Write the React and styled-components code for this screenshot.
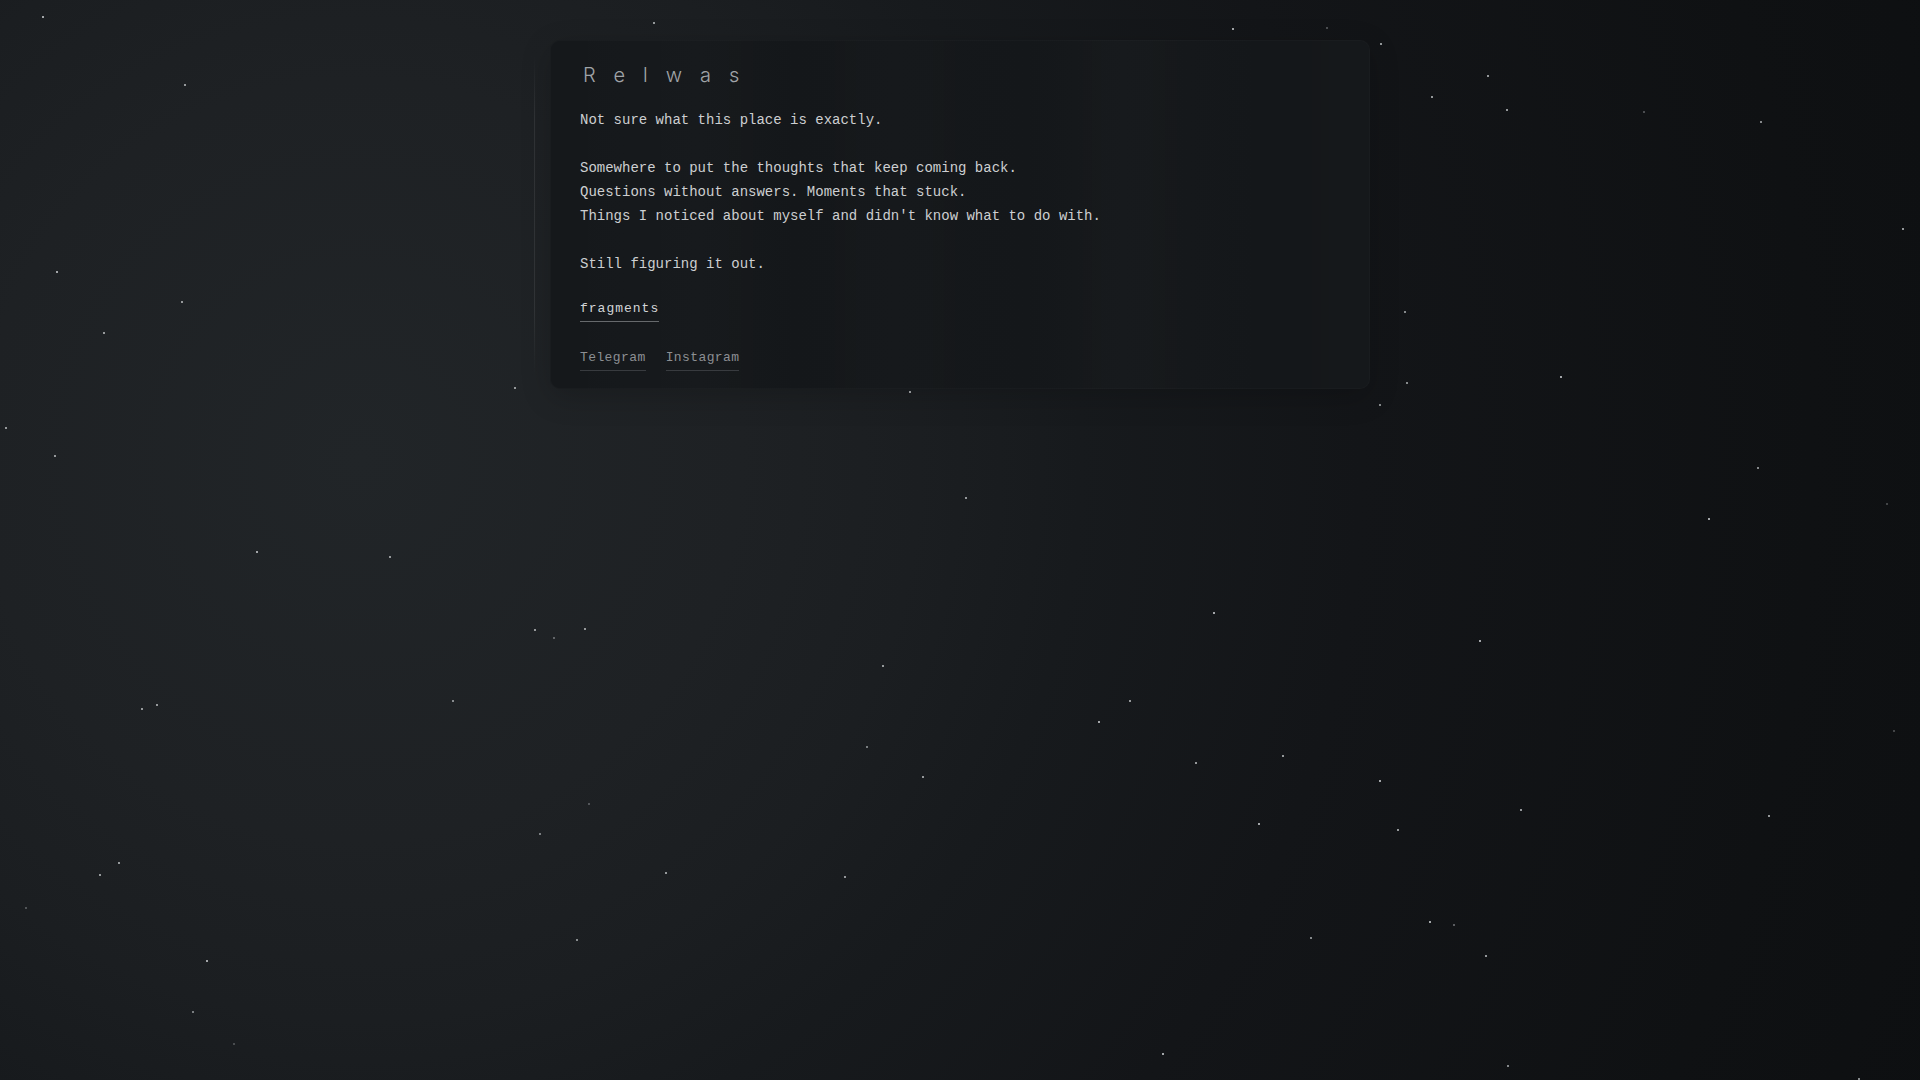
import React from "react";
import styled, { createGlobalStyle } from "styled-components";

const GlobalStyle = createGlobalStyle`
  html, body { margin: 0; padding: 0; background: #121417; }
  #root { min-height: 100vh; }
  * { box-sizing: border-box; }
`;

const Page = styled.main`
  position: relative;
  min-height: 100vh;
  overflow: hidden;
  display: flex;
  justify-content: center;
  align-items: flex-start;
  padding-top: 40px;
  background: radial-gradient(
    circle at 360px 460px,
    #212528 0px,
    #1e2124 380px,
    #1b1e21 560px,
    #171a1d 720px,
    #131518 1000px,
    #0f1113 1450px,
    #0c0e10 1900px
  );
`;

const Sky = styled.div`
  position: absolute;
  inset: 0;
  pointer-events: none;
`;

const Star = styled.span`
  position: absolute;
  width: 2px;
  height: 2px;
  background: #a3a6a9;
`;

const Card = styled.section`
  position: relative;
  z-index: 1;
  width: 820px;
  padding: 22px 29px 17px;
  border-radius: 10px;
  background:
    linear-gradient(
      90deg,
      rgba(0, 0, 0, 0) 0%,
      rgba(255, 255, 255, 0.006) 18%,
      rgba(0, 0, 0, 0.04) 30%,
      rgba(255, 255, 255, 0.004) 42%,
      rgba(0, 0, 0, 0.05) 58%,
      rgba(255, 255, 255, 0.006) 70%,
      rgba(0, 0, 0, 0.05) 86%,
      rgba(0, 0, 0, 0) 100%
    ),
    #15181b;
  border: 1px solid rgba(255, 255, 255, 0.02);
  box-shadow: 0 8px 30px rgba(0, 0, 0, 0.18);

  &::before {
    content: "";
    position: absolute;
    left: -17px;
    top: 14px;
    bottom: 14px;
    width: 1px;
    background: linear-gradient(
      180deg,
      rgba(255, 255, 255, 0) 0%,
      rgba(255, 255, 255, 0.08) 20%,
      rgba(255, 255, 255, 0.08) 80%,
      rgba(255, 255, 255, 0) 100%
    );
  }
`;

const Title = styled.h1`
  margin: 0 0 21px;
  padding-left: 3px;
  font-family: Inter, "Noto Sans", sans-serif;
  font-weight: 300;
  font-size: 20px;
  line-height: 24px;
  letter-spacing: 0.9em;
  color: #a0a4a8;
`;

const Text = styled.p`
  margin: 0 0 24px;
  font-family: "Liberation Mono", "DejaVu Sans Mono", monospace;
  font-size: 14px;
  line-height: 24px;
  color: #cdcfd1;

  &:last-of-type {
    margin-bottom: 0;
  }
`;

const Line = styled.span`
  display: block;
`;

const Fragments = styled.a`
  display: inline-block;
  margin-top: 24px;
  padding-bottom: 3px;
  font-family: "Liberation Mono", "DejaVu Sans Mono", monospace;
  font-size: 13px;
  line-height: 18px;
  letter-spacing: 1px;
  color: #d3d5d7;
  text-decoration: none;
  border-bottom: 1px solid #66696c;
`;

const Links = styled.nav`
  display: flex;
  gap: 20px;
  margin-top: 27px;
`;

const SocialLink = styled.a`
  display: inline-block;
  padding-bottom: 3px;
  font-family: "Liberation Mono", "DejaVu Sans Mono", monospace;
  font-size: 13px;
  line-height: 18px;
  letter-spacing: 0.4px;
  color: #8c8f93;
  text-decoration: none;
  border-bottom: 1px solid #383b3f;
`;

const stars = [
  [42, 16, 1], [653, 22, 0.9], [184, 84, 0.9], [1232, 28, 1], [1326, 27, 0.4],
  [1380, 43, 0.9], [1487, 75, 0.9], [1431, 96, 0.9], [1506, 109, 0.9],
  [1643, 111, 0.4], [1760, 121, 0.8], [1902, 228, 0.9], [56, 271, 1],
  [181, 301, 0.9], [103, 332, 0.9], [1404, 311, 0.8], [1560, 376, 1],
  [1406, 382, 0.8], [514, 387, 0.9], [909, 391, 1], [1379, 404, 0.8],
  [5, 427, 0.9], [54, 455, 0.9], [1757, 467, 0.8], [965, 497, 0.9],
  [1708, 518, 1], [1886, 503, 0.35], [256, 551, 1], [389, 556, 0.9],
  [1213, 612, 1], [1479, 640, 1], [534, 629, 0.9], [553, 637, 0.5],
  [584, 628, 0.9], [882, 665, 0.9], [141, 708, 0.9], [156, 704, 0.9],
  [452, 700, 0.8], [1129, 700, 0.9], [1098, 721, 1], [866, 746, 0.7],
  [1893, 730, 0.35], [922, 776, 0.9], [1195, 762, 0.9], [1282, 755, 0.9],
  [1379, 780, 1], [1520, 809, 0.9], [1768, 815, 0.9], [1258, 823, 1],
  [1397, 829, 0.9], [588, 803, 0.4], [539, 833, 0.7], [118, 862, 0.9],
  [99, 874, 0.9], [665, 872, 0.9], [844, 876, 0.9], [25, 907, 0.4],
  [1429, 921, 1], [1453, 924, 0.5], [1310, 937, 0.8], [576, 939, 0.8],
  [1485, 955, 0.9], [206, 960, 1], [192, 1011, 0.7], [233, 1043, 0.35],
  [1162, 1053, 1], [1507, 1065, 0.8], [1858, 1078, 0.8],
];

export default function App() {
  return (
    <>
      <GlobalStyle />
      <Page>
        <Sky aria-hidden="true">
          {stars.map(([x, y, o], i) => (
            <Star key={i} style={{ left: x, top: y, opacity: o }} />
          ))}
        </Sky>
        <Card>
          <Title>Relwas</Title>
          <Text>Not sure what this place is exactly.</Text>
          <Text>
            <Line>Somewhere to put the thoughts that keep coming back.</Line>
            <Line>Questions without answers. Moments that stuck.</Line>
            <Line>Things I noticed about myself and didn't know what to do with.</Line>
          </Text>
          <Text>Still figuring it out.</Text>
          <Fragments href="#">fragments</Fragments>
          <Links>
            <SocialLink href="#">Telegram</SocialLink>
            <SocialLink href="#">Instagram</SocialLink>
          </Links>
        </Card>
      </Page>
    </>
  );
}
